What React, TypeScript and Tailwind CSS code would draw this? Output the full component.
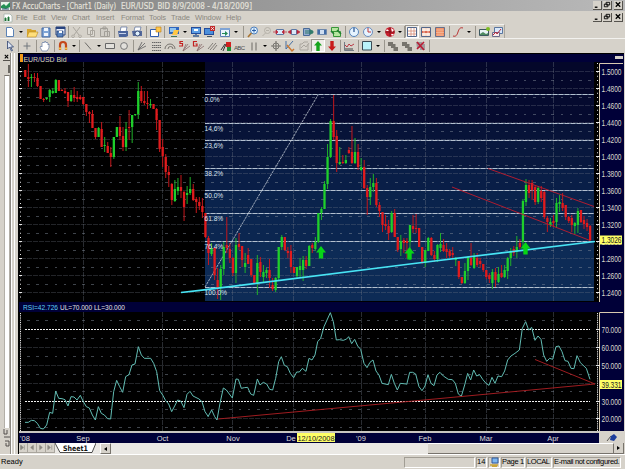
import type { ReactNode } from "react";
import { clsx } from "clsx";

type Candle = [up: 0 | 1, high: number, top: number, bottom: number, low: number];

const CANDLES: Candle[] = [
  [0, 70, 70, 77, 77], [0, 64, 77, 79, 87], [1, 74, 77, 78, 87], [0, 73, 77, 78, 82], [0, 73, 78, 86, 87],
  [0, 86, 86, 99, 99], [0, 98, 99, 100, 102], [1, 97, 98, 99, 100], [1, 89, 90, 97, 102], [1, 88, 91, 93, 94],
  [1, 79, 80, 93, 93], [0, 80, 80, 91, 91], [0, 89, 90, 91, 91], [0, 88, 91, 93, 94], [0, 92, 92, 101, 107],
  [1, 90, 95, 101, 102], [0, 87, 95, 98, 102], [0, 91, 97, 99, 102], [0, 95, 97, 99, 100], [0, 97, 97, 104, 105],
  [0, 104, 104, 112, 116], [0, 111, 112, 114, 123], [0, 110, 114, 128, 128], [0, 128, 128, 137, 139], [1, 127, 128, 137, 137],
  [0, 122, 129, 147, 147], [1, 137, 145, 146, 152], [0, 142, 146, 153, 153], [0, 147, 153, 157, 167], [1, 137, 137, 157, 159],
  [1, 127, 127, 137, 137], [0, 116, 127, 136, 140], [0, 127, 136, 147, 151], [1, 122, 129, 147, 151], [0, 110, 127, 128, 140],
  [1, 115, 115, 127, 143], [1, 114, 114, 115, 116], [1, 82, 91, 114, 119], [0, 86, 91, 101, 103], [0, 91, 101, 103, 105],
  [0, 91, 103, 104, 109], [1, 99, 104, 105, 108], [0, 104, 104, 109, 109], [0, 108, 109, 120, 130], [0, 120, 120, 149, 152],
  [0, 139, 147, 156, 167], [0, 154, 157, 172, 178], [0, 166, 172, 175, 187], [0, 183, 184, 200, 205], [1, 180, 189, 201, 202],
  [1, 178, 187, 191, 195], [0, 175, 187, 191, 198], [0, 191, 192, 207, 221], [1, 186, 193, 195, 204], [1, 177, 189, 193, 195],
  [0, 184, 189, 200, 201], [0, 197, 199, 202, 213], [0, 197, 202, 206, 210], [0, 198, 206, 212, 218], [0, 213, 213, 237, 238],
  [0, 236, 238, 253, 265], [1, 243, 248, 254, 256], [0, 247, 248, 275, 280], [0, 268, 280, 288, 299], [1, 265, 269, 288, 300],
  [1, 242, 247, 269, 275], [0, 217, 245, 248, 253], [0, 243, 249, 258, 263], [0, 257, 258, 273, 276], [1, 238, 245, 273, 283],
  [0, 233, 244, 247, 250], [0, 246, 246, 260, 267], [1, 253, 263, 267, 273], [0, 248, 255, 264, 264], [0, 259, 259, 275, 277],
  [0, 275, 275, 283, 284], [1, 255, 263, 283, 295], [0, 257, 262, 272, 277], [1, 265, 272, 277, 282], [1, 268, 270, 273, 278],
  [0, 259, 270, 278, 288], [0, 278, 285, 289, 291], [1, 277, 278, 290, 292], [1, 247, 247, 278, 280], [1, 235, 237, 247, 250],
  [0, 237, 237, 250, 251], [0, 247, 251, 253, 258], [0, 245, 251, 267, 273], [0, 267, 267, 273, 273], [1, 267, 267, 276, 279],
  [1, 258, 266, 270, 277], [1, 256, 260, 270, 281], [0, 256, 260, 266, 269], [1, 245, 246, 266, 266], [0, 243, 245, 248, 253],
  [1, 237, 242, 249, 251], [1, 213, 213, 242, 243], [1, 207, 209, 213, 220], [1, 181, 184, 209, 209], [1, 144, 157, 184, 189],
  [1, 119, 121, 157, 158], [0, 95, 121, 137, 140], [0, 130, 136, 163, 172], [1, 147, 162, 164, 165], [0, 155, 162, 163, 164],
  [1, 155, 160, 163, 164], [0, 147, 150, 153, 154], [0, 126, 152, 163, 164], [1, 138, 152, 163, 164], [0, 144, 152, 167, 170],
  [1, 158, 167, 170, 171], [0, 160, 167, 188, 189], [0, 185, 188, 197, 215], [1, 178, 187, 197, 205], [1, 174, 183, 187, 192],
  [0, 178, 183, 205, 207], [0, 202, 205, 211, 217], [0, 212, 212, 225, 232], [0, 215, 224, 226, 230], [0, 220, 226, 233, 240],
  [1, 211, 213, 232, 233], [0, 209, 213, 237, 237], [0, 237, 237, 250, 252], [1, 235, 241, 249, 256], [0, 238, 240, 243, 253],
  [0, 238, 241, 243, 258], [1, 225, 225, 242, 260], [0, 215, 226, 229, 233], [0, 214, 228, 229, 233], [0, 228, 228, 247, 247],
  [0, 247, 247, 262, 264], [1, 250, 250, 263, 267], [1, 237, 238, 251, 251], [0, 237, 238, 255, 256], [0, 251, 255, 259, 262],
  [1, 244, 245, 259, 262], [1, 233, 244, 248, 252], [0, 239, 245, 251, 252], [0, 243, 249, 252, 258], [0, 249, 251, 256, 258],
  [0, 247, 253, 255, 259], [1, 257, 259, 260, 266], [0, 261, 261, 277, 279], [0, 277, 277, 283, 284], [1, 263, 271, 283, 284],
  [1, 256, 257, 271, 280], [0, 243, 258, 265, 266], [1, 253, 257, 268, 269], [0, 253, 258, 265, 267], [0, 258, 261, 264, 268],
  [0, 264, 264, 270, 272], [0, 270, 270, 277, 279], [0, 273, 275, 279, 283], [1, 269, 272, 283, 289], [0, 268, 272, 280, 287],
  [1, 267, 274, 282, 283], [0, 265, 273, 277, 278], [1, 265, 270, 277, 278], [1, 257, 258, 271, 279], [1, 248, 252, 258, 266],
  [0, 246, 249, 253, 256], [1, 236, 247, 252, 258], [0, 239, 243, 247, 249], [1, 199, 201, 242, 246], [1, 179, 185, 202, 206],
  [0, 180, 185, 193, 198], [0, 180, 183, 190, 200], [0, 185, 187, 202, 205], [1, 186, 188, 202, 204], [0, 186, 191, 198, 202],
  [0, 191, 192, 217, 219], [0, 216, 218, 222, 232], [1, 218, 222, 225, 227], [0, 215, 221, 223, 227], [1, 198, 203, 222, 228],
  [1, 195, 202, 204, 212], [0, 193, 203, 208, 211], [0, 205, 205, 217, 220], [0, 216, 217, 221, 223], [0, 215, 218, 225, 232],
  [1, 222, 223, 226, 234], [1, 208, 211, 225, 233], [0, 210, 210, 222, 223], [0, 216, 220, 224, 229], [0, 219, 223, 227, 231],
  [0, 225, 226, 240, 241],
];

const RSI_PARTS = [
  {
    shift: 0,
    points:
      "75,367 85,367 94,361 103,362 112,370 121,385 130,387 140,375 149,337 158,340 167,273 176,295 186,296 195,299 204,318 213,290 222,291 231,300 241,286 250,305 259,320 268,324 277,345 286,360 295,320 304,340 313,345 323,356 332,357 341,275 350,241 359,260 368,277 377,230 387,224 396,195 405,192 415,140 424,165 433,175 452,175 461,190 470,215 479,272 488,285 497,302 506,312 515,335 524,318 533,300 542,303 552,323 561,283 570,274 579,288 597,297 606,305 615,335 625,350",
  },
  {
    shift: 200,
    points:
      "24,350 35,330 44,350 51,360 60,310 70,264 79,270 97,294 108,237 115,238 124,265 133,263 143,262 152,282 161,286 172,237 180,255 190,247 200,252 209,268 218,270 227,235 236,185 244,170 253,196 262,200 271,220 281,233 290,216 298,216 307,205 318,214 327,175 336,180 345,165 353,125 362,115 372,80 391,38 400,65 409,120 418,119 430,121 440,117 446,110 455,131 464,118 473,138 482,148 492,190 501,203 510,187 519,180 528,213 537,225 546,250 565,254 574,223 583,250 592,270 601,250 619,252",
  },
  {
    shift: 405,
    points:
      "5,254 14,217 23,217 32,222 42,260 51,272 60,258 69,224 78,250 87,257 96,225 105,217 115,228 130,238 142,239 151,250 160,282 169,289 179,255 188,220 197,240 206,210 215,228 224,224 233,238 243,250 252,256 261,232 270,250 279,228 290,230 299,213 308,180 318,168 330,160 343,150 352,85 362,65 371,90 380,82 390,121 399,108 408,118 416,165 425,184 434,175 443,178 453,140 462,138 471,155 480,182 489,184 498,205 507,206 516,167 526,188 544,205 555,238",
  },
];

const MONTH_LINES = [83, 162, 232, 293, 361, 425, 486, 553];

const FIBS: [string, number][] = [
  ["0.0%", 94.5], ["14.6%", 123.5], ["23.6%", 140.5], ["38.2%", 168.5],
  ["50.0%", 190.5], ["61.8%", 213.5], ["76.4%", 241.5], ["100.0%", 287.5],
];

const BANDS: [number, number, string][] = [
  [62, 94, "#04072a"], [94, 123, "#050a2f"], [123, 140, "#071338"], [140, 168, "#08183e"],
  [168, 190, "#091e47"], [190, 213, "#0a234c"], [213, 241, "#0b2650"], [241, 301, "#0d2b56"],
];

const PRICES = ["1.5000", "1.4800", "1.4600", "1.4400", "1.4200", "1.4000", "1.3800", "1.3600", "1.3400", "1.3200", "1.3000", "1.2800", "1.2600", "1.2400"];

const ICONS: Record<string, ReactNode> = {
  new: <path d="M3.5 2.5h5l2 2v7h-7z" fill="#fff" stroke="#5b82b5" />,
  open: <><path d="M2 4h4l1 1h4v6H2z" fill="#d8a52c" /><path d="M4 7h9l-2 5H2z" fill="#ffdf7a" stroke="#b88a22" strokeWidth=".6" /></>,
  save: <><path d="M3 3h8v9H3z" fill="#7fa5d6" stroke="#4369a5" /><path d="M5 3h4v3H5zM5 8h4v3H5z" fill="#eef4fc" /></>,
  saveAll: <><path d="M3 2h9v8H3z" fill="#e8eefa" stroke="#27427e" /><path d="M3 2h9v2H3z" fill="#27427e" /><path d="M4 6h6v6H4z" fill="#5a83bd" stroke="#1e3a70" strokeWidth=".7" /><path d="M6 6h3v2H6z" fill="#fff" /></>,
  cut: <path d="M3 2l6 8M10 2L4 10M3 10a1.3 1.3 0 1 0 .1 0M10 10a1.3 1.3 0 1 0 .1 0" fill="none" stroke="#aaa69e" />,
  copy: <path d="M3.5 2.5h5v7h-5zM6.5 5.5h4v6h-4z" fill="#dedbd4" stroke="#aaa69e" />,
  paste: <path d="M2.5 3.5h7v8h-7zM5 2h3v2H5zM6.500 6.500h5v5h-5z" fill="#d0cdc6" stroke="#a29f98" />,
  print: <><path d="M5 2h6l-1 5H4z" fill="#fff" stroke="#536a99" strokeWidth=".7" /><path d="M2 6h10v5l-2 1H3z" fill="#4c659c" /><path d="M3 8h7v1H3z" fill="#c7d3ea" /></>,
  preview: <><path d="M5 2h6l-1 4H4z" fill="#fff" stroke="#536a99" strokeWidth=".7" /><path d="M2 6h10v5H3z" fill="#53699b" /><circle cx="7.500" cy="8.500" r="2.500" fill="#dff0fb" stroke="#3c4f7d" /></>,
  chartWin: <><path d="M2.500 4.500h8v7h-8z" fill="#fff" stroke="#2f5db0" /><path d="M8 2h5v5H8z" fill="#ffc84b" stroke="#b87b16" strokeWidth=".6" /></>,
  monOrange: <><path d="M2 2h10v7H2z" fill="#2f66be" /><path d="M3 3h6v4H3z" fill="#8fc4f1" /><path d="M7 5h5l-2 5H5z" fill="#ffc744" /><path d="M4 11h6v1H4z" fill="#475" /></>,
  monBlue: <><path d="M2 2h10v7H2z" fill="#234c9c" /><path d="M3 3h8v5H3z" fill="#5e9fe4" /><path d="M5 4h4v2H5z" fill="#fff" /><path d="M6 9h2v1h2v2H4v-2h2z" fill="#607a9e" /></>,
  monRed: <><path d="M1 3h10v7H1z" fill="#234c9c" /><path d="M2 4h8v5H2z" fill="#4c8fdb" /><path d="M7 1h5v5H7z" fill="#c22b2b" /><path d="M8 2l3 3M11 2L8 5" stroke="#fff" strokeWidth=".7" /><path d="M4 11h5v1H4z" fill="#456" /></>,
  winArrow: <><path d="M2.500 3.500h9v8h-9z" fill="#eaf3fd" stroke="#5a7fb4" /><path d="M2 3h10v2H2z" fill="#7fa4d5" /><path d="M4 8h3V6l3 2.500L7 11V9H4z" fill="#248a56" /></>,
  zoomIn: <><circle cx="8" cy="5.500" r="3.500" fill="#dff1ff" stroke="#4b7ebd" /><path d="M6 5.500h4M8 3.500v4" stroke="#2a5ea5" /><path d="M5.500 8L2 12" stroke="#a97532" strokeWidth="1.700" /></>,
  zoomOut: <><circle cx="7.500" cy="5.500" r="3" fill="none" stroke="#b5b1a8" /><path d="M6 5.500h3M5.500 8L2.500 11" stroke="#b5b1a8" /></>,
  shrink: <><path d="M3.500 4.500h7v5h-7z" fill="#d8e8f8" stroke="#5b79a6" /><path d="M0 7h4M10 7h4M3 5l2 2-2 2zM11 5L9 7l2 2z" stroke="#b9263b" fill="#b9263b" strokeWidth=".7" /></>,
  expand: <><path d="M4.500 4.500h5v5h-5z" fill="#d8e8f8" stroke="#5b79a6" /><path d="M1 7l3-2v4zM13 7l-3-2v4z" fill="#b9263b" stroke="#b9263b" strokeWidth=".6" /></>,
  shiftBars: <><path d="M2.500 3.500h6v7h-6z" fill="#93acd0" stroke="#486a98" /><path d="M4 6h8M4 8h8" stroke="#317b6b" /><path d="M9 4l4 3-4 3z" fill="#317b6b" /></>,
  bars: <><path d="M2.500 4.500h9v5h-9z" fill="#cfdef1" stroke="#6f89ac" /><path d="M3 5h2v4H3zM9 5h2v4H9z" fill="#416ba6" /></>,
  refresh: <><path d="M2.500 2.500h7v4h-7zM4.500 6.500h7v5h-7z" fill="#b6e6a0" stroke="#39963a" /><path d="M2 6l3 3M8 5l4 4" stroke="#237f31" strokeWidth="1.500" /></>,
  clock: <><circle cx="7" cy="7" r="4.500" fill="#e6f4ff" stroke="#5585bd" /><path d="M7 3v4" stroke="#244d8e" strokeWidth="1.200" /></>,
  clockRed: <><circle cx="7" cy="7" r="4.500" fill="#e6f4ff" stroke="#6a8cbd" /><path d="M7 3v4h3" stroke="#c23535" fill="none" /></>,
  wheel: <><circle cx="7" cy="7" r="4.800" fill="#c81f2d" /><path d="M7 2v10M2 7h10" stroke="#5d111a" strokeWidth=".6" /><path d="M8 3l3 2-2 2zM4 4l2 2-3 0zM8 9h3l-2 2z" fill="#fff" /></>,
  gridA: <><path d="M2.500 2.500h9v9h-9z" fill="#fff" stroke="#53678b" /><path d="M3 6h8M3 9h8M6 3v8M9 3v8" stroke="#d58a75" strokeWidth=".8" /></>,
  gridB: <><path d="M2.500 2.500h9v9h-9z" fill="#f6d9c8" stroke="#53678b" /><path d="M3 7h8" stroke="#d0422a" strokeWidth="1.500" /><path d="M3 5h8M3 9h8M5 3v8M9 3v8" stroke="#fff" strokeWidth=".6" /></>,
  gridC: <><path d="M2.500 2.500h9v9h-9z" fill="#ee8457" stroke="#68708b" /><path d="M3 5h8M3 7.500h8M3 10h8M5 3v8M7 3v8M9 3v8" stroke="#f9c8aa" strokeWidth=".6" /></>,
  curve: <path d="M2 11c3 1 4-1 5-4s2-5 5-4" fill="none" stroke="#b93434" />,
  picture: <><path d="M2.500 4.500h9v6h-9z" fill="#e9f3f4" stroke="#3c5860" /><path d="M3 9l3-2 3 2 2-1v2H3z" fill="#4d8a60" /><circle cx="11" cy="4" r="2" fill="#7dbb24" /></>,
  chartPair: <><path d="M3.500 2.500h8v6h-8z" fill="#d9e8fa" stroke="#5976a0" /><path d="M1.500 7.500h7v4h-7z" fill="#f7eaea" stroke="#6c6c8c" /><path d="M2 10l3-3 1 2 4-5" fill="none" stroke="#b4243c" /></>,
  cursor: <path d="M4.500 2v8l2-2 2 4 1-.5L7.700 8h2.800z" fill="#dfe6f4" stroke="#2d416f" strokeWidth=".8" />,
  plus: <path d="M7 3.500v7M3.500 7h7" stroke="#71767d" />,
  hand: <path d="M4 12L2 8l1-1 1 1V4l1-1 1 1 1-2 1 1v1l1-1 1 1v2l1-1v4l-2 3z" fill="#fff" stroke="#7386a8" strokeWidth=".8" />,
  magnet: <><path d="M4 11V6a3 3 0 0 1 6 0v5" fill="none" stroke="#c4471b" strokeWidth="2.200" /><path d="M3 9.500h2.200M9 9.500h2.200" stroke="#f5c84b" strokeWidth="2" /></>,
  line: <path d="M4 3.500l6 7" stroke="#6d6b68" />,
  rect: <path d="M2.500 4.500h9v5h-9z" fill="#e2e0db" stroke="#666" />,
  circle: <circle cx="7" cy="7" r="3.400" fill="#e2e0db" stroke="#777" />,
  fan: <path d="M3 11L7 3M3 11l7-7M3 11l8-4" stroke="#6b6b6b" strokeWidth=".9" />,
  rows: <path d="M3 3.500h9M3 6.500h9M3 8.500h9M3 11.500h9" stroke="#666" strokeDasharray="1.500 .5" />,
  arcs: <path d="M2 10a5 5 0 0 1 10 0M5 10a2.500 2.500 0 0 1 5 0" fill="none" stroke="#77736d" />,
  fanS: <><path d="M6 12l5-7M6 12l7-5M6 12l3-7" stroke="#8a6d6d" strokeWidth=".8" /><path d="M6 2.500H3v2h2.500v2.500H2" fill="none" stroke="#c32020" strokeWidth="1.200" /></>,
  fanG: <><path d="M6 12l5-7M6 12l7-5M6 12l3-7" stroke="#8a6d6d" strokeWidth=".8" /><path d="M6 2.500H2.500v4.500H6V5H4.500" fill="none" stroke="#c32020" strokeWidth="1.200" /></>,
  parallels: <path d="M3 10l5-6M5 11l6-7M8 11l4-5" stroke="#77736d" strokeWidth=".9" />,
  brush: <><path d="M7 3h5v5H7z" fill="#d2211f" /><path d="M8 8h4v4H8z" fill="#208d35" /><path d="M2 11l4-6M4 12l3-7" stroke="#333" /></>,
  abc: <text x="1" y="10.500" fontSize="6" fill="#4b4b4b" textLength="11">ABC</text>,
  bars2: <path d="M5 3.500v8M9 3.500v8" stroke="#85827c" strokeWidth="1.300" />,
  target: <><circle cx="7" cy="7" r="3" fill="none" stroke="#77756f" /><path d="M7 2v10M2 7h10" stroke="#77756f" strokeWidth="1.200" /></>,
  percent: <><path d="M3 2v8l7-8" fill="none" stroke="#456fa3" /><path d="M4 6l5 6 2-2" fill="none" stroke="#cc7831" strokeWidth="1.500" /></>,
  ghost: <path d="M3 11V5h2l2-2h4M3 11h8V5M4 9l3-3 2 2 3-4" fill="none" stroke="#aaa69e" />,
  up: <path d="M7 2l4 4.500H8.700V12H5.300V6.500H3z" fill="#16a41c" />,
  down: <path d="M7 12l4-4.500H8.700V2H5.300v5.500H3z" fill="#c81a1a" />,
  pulse: <><path d="M2.500 3v8.500H12" fill="none" stroke="#737a83" /><path d="M3 6l2 2 2-3 2 2 3-2" fill="none" stroke="#b93845" /><path d="M3 10h8" stroke="#444" /></>,
  swatch: <path d="M2.500 2.500h9v8.500h-9z" fill="#baf3fa" stroke="#3b4b55" />,
  cascade: <path d="M2 3h5v2h2.500v3H12v4H7.500V9H5V7H2z" fill="#77746d" />,
  erase: <><path d="M2 3h6v2h3v6H6V9H3z" fill="#a19a9c" /><path d="M3 3l7 8M10 3L3 10" stroke="#b91b33" strokeWidth="1.600" /></>,
};

// name + cell width; "v" is the menu caret, "|" a separator
const TOP_TOOLS: [string, string][] = [
  ["new", "w-3.5"], ["v", "w-2"], ["open", "w-3.5"], ["save", "w-3.5"], ["saveAll", "w-3.5"], ["|", "w-[3px]"],
  ["cut", "w-3.5"], ["copy", "w-3.5"], ["paste", "w-3.5"], ["|", "w-1"], ["print", "w-3.5"], ["preview", "w-3.5"], ["|", "w-1"],
  ["chartWin", "w-3.5"], ["|", "w-1"], ["monOrange", "w-[15px]"], ["v", "w-2"], ["monBlue", "w-3.5"], ["monRed", "w-3.5"],
  ["winArrow", "w-[15px]"], ["v", "w-2"], ["|", "w-1.5"], ["zoomIn", "w-3.5"], ["zoomOut", "w-[13px]"], ["shrink", "w-3.5"],
  ["expand", "w-3.5"], ["shiftBars", "w-3.5"], ["bars", "w-3.5"], ["refresh", "w-3.5"], ["|", "w-1"], ["clock", "w-3.5"],
  ["clockRed", "w-3.5"], ["v", "w-2"], ["wheel", "w-3.5"], ["v", "w-1.5"], ["|", "w-0.5"], ["gridA", "w-3.5"], ["gridB", "w-3.5"],
  ["gridC", "w-3.5"], ["|", "w-1"], ["curve", "w-3.5"], ["v", "w-2"], ["|", "w-1"], ["picture", "w-3.5"], ["chartPair", "w-[13px]"],
];

const DRAW_TOOLS: [string, string][] = [
  ["cursor", "w-3.5"], ["|", "w-[3px]"], ["plus", "w-3.5"], ["|", "w-1"], ["hand", "w-3.5"], ["|", "w-1"], ["magnet", "w-3.5"], ["v", "w-2"],
  ["|", "w-[3px]"], ["line", "w-3.5"], ["v", "w-2"], ["rect", "w-3.5"], ["circle", "w-3.5"], ["|", "w-1"], ["fan", "w-3.5"],
  ["rows", "w-3.5"], ["arcs", "w-3.5"], ["fanS", "w-3.5"], ["fanG", "w-3.5"], ["parallels", "w-3.5"], ["brush", "w-3.5"], ["abc", "w-3.5"],
  ["bars2", "w-3.5"], ["v", "w-2"], ["target", "w-3.5"], ["percent", "w-3.5"], ["ghost", "w-3.5"], ["up", "w-3.5"], ["down", "w-3.5"],
  ["|", "w-[3px]"], ["pulse", "w-3.5"], ["|", "w-1"], ["swatch", "w-3.5"], ["v", "w-2"], ["|", "w-1"], ["cascade", "w-3.5"],
  ["cascade", "w-3.5"], ["erase", "w-3.5"], ["|", "w-[3px]"],
];

const MENU: [string, string][] = [
  ["File", "w-[17px]"], ["Edit", "w-[18px]"], ["View", "w-[21px]"], ["Chart", "w-6"], ["Insert", "w-[25px]"], ["Format", "w-7"],
  ["Tools", "w-[22px]"], ["Trade", "w-6"], ["Window", "w-[31px]"], ["Help", "w-4"],
];

function Toolbar({ tools, className }: { tools: [string, string][]; className?: string }) {
  return (
    <div className={clsx("flex h-3.5 items-center border-t border-white/70 pl-[3px]", className)}>
      {tools.map(([name, width], i) => (
        <span
          key={i}
          className={clsx(
            "flex h-[13px] shrink-0 items-center justify-center",
            width,
            (name === "up" || name === "gridA") && "border border-[#9b978f] border-r-white border-b-white bg-[#efede8]"
          )}
        >
          {name === "|" && <span className="h-3 w-px bg-[#9a968d]" />}
          {name === "v" && <span className="border-x-2 border-t-2 border-x-transparent border-t-black" />}
          {ICONS[name] && (
            <svg viewBox="0 0 14 14" className="h-3.5 w-3.5 shrink-0">
              {ICONS[name]}
            </svg>
          )}
        </span>
      ))}
    </div>
  );
}

function WindowButtons() {
  return (
    <div className="ml-auto flex gap-px pr-[2px]">
      {["M2 7h3", "M3.500 1.500h4v3h-4zM1.500 3.500h4v3h-4z", "M2 1.500l5 5M7 1.500l-5 5"].map((d, i) => (
        <svg key={d} viewBox="0 0 9 9" className={clsx("h-[9px] w-[9px] border-r border-b border-[#55524d] bg-[#d6d2ca]", i === 2 && "ml-px")}>
          <path d={d} fill="none" stroke="#000" strokeWidth={i === 1 ? 1 : 1.5} />
        </svg>
      ))}
    </div>
  );
}

function GridLines({ from, to, rows, midRows, right }: { from: number; to: number; rows: number[]; midRows: number[]; right: number }) {
  return (
    <g fill="none" shapeRendering="crispEdges">
      {MONTH_LINES.map((x) => (
        <path key={x} d={`M${x + 0.5} ${from}V${to}`} stroke="#737b88" strokeOpacity=".36" strokeDasharray="5 1" />
      ))}
      {rows.map((y) => (
        <path key={y} d={`M21 ${y}H${right}`} stroke="#737b88" strokeOpacity=".3" strokeDasharray="5 1" />
      ))}
      {midRows.map((y) => (
        <path key={y} d={`M27 ${y}H${right}`} stroke="#7d8795" strokeOpacity=".5" strokeDasharray="2.500 6.700" />
      ))}
    </g>
  );
}

function Arrow({ x, y }: { x: number; y: number }) {
  return <path d={`M${x} ${y}l5 6.500h-2.800v6h-4.400v-6h-2.800z`} fill="#08d516" />;
}

function PriceChart() {
  const rows = PRICES.map((_, i) => Math.round(71.5 + i * 17) - 0.5);
  return (
    <svg viewBox="19 62 605 240" className="block h-[240px] w-[605px] bg-black font-['Liberation_Sans']">
      {BANDS.map(([top, bottom, fill]) => (
        <rect key={top} x="205" y={top} width="389" height={bottom - top} fill={fill} />
      ))}
      <rect x="600" y="62" width="24" height="240" fill="#000038" />
      <GridLines from={62} to={301} rows={rows} midRows={rows.slice(0, -1).map((y) => y + 9)} right={594} />

      <g shapeRendering="crispEdges">
        {FIBS.map(([label, y]) => (
          <g key={label}>
            <path d={`M205 ${y}H594`} stroke="#7b8da6" />
            <path d={`M205 ${y}H594`} stroke="#b3c0cf" strokeDasharray="4 2" />
          </g>
        ))}
      </g>
      <path d="M205 287L318 95" stroke="#c6ced8" strokeWidth=".8" strokeDasharray="2.500 .8" />

      {CANDLES.map(([up, high, top, bottom, low], i) => {
        const x = 25.3 + i * 3.053;
        return (
          <g key={i}>
            <rect x={x - 0.5} y={high} width="1" height={Math.max(1, low - high)} fill={up ? "#1fb02a" : "#c4171b"} />
            <rect x={x - 1.15} y={top} width="2.300" height={Math.max(1, bottom - top)} fill={up ? "#1fcf2b" : "#e11b1d"} />
          </g>
        );
      })}

      <g fill="#dce5ee" fontSize="7.500">
        {FIBS.map(([label, y]) => (
          <text key={label} x="204.500" y={y + 7.500} textLength={label.length * 3.75} lengthAdjust="spacingAndGlyphs">{label}</text>
        ))}
      </g>
      <path d="M488 168.500L594 206.500M452 187L590 240.500" stroke="#c21c2c" strokeWidth=".9" />
      <path d="M181 292.500L200 290.300L410 264L595 241.500" fill="none" stroke="#48e4f4" strokeWidth="1.700" />
      <Arrow x={321} y={246} />
      <Arrow x={409.5} y={247} />
      <Arrow x={525.5} y={242} />

      {/* left ruler and price axis */}
      <path d="M20.500 67V299M597.500 63V299" stroke="#e8e8e8" strokeDasharray="1 3.250" />
      <path d="M599.500 302V63.500H623" fill="none" stroke="#d8c9b0" />
      {PRICES.map((price, i) => (
        <g key={price}>
          <path d={`M596 ${rows[i]}h4M19 ${rows[i]}h3`} stroke="#e8e8e8" />
          <text x="601.500" y={rows[i] + 3.3} fontSize="8.500" fill="#d9d8cc" textLength="20" lengthAdjust="spacingAndGlyphs">{price}</text>
        </g>
      ))}
      <rect x="600" y="235.500" width="22" height="9" fill="#ffff66" />
      <text x="601.500" y="243.300" fontSize="8.500" fill="#222" textLength="20" lengthAdjust="spacingAndGlyphs">1.3026</text>
    </svg>
  );
}

function RsiChart() {
  const levels: [string, number][] = [["70.000", 329.5], ["60.000", 347.5], ["50.000", 365.5], ["30.000", 401.5], ["20.000", 418.5]];
  return (
    <svg viewBox="19 312 605 119" className="block h-[119px] w-[605px] bg-black font-['Liberation_Sans']">
      <rect x="600" y="312" width="24" height="119" fill="#000038" />
      <GridLines from={312} to={431} rows={[347.5, 365.5, 383.5, 418.5]} midRows={[320.5, 338.5, 356.5, 374.5, 391.5, 409.5, 427.5]} right={598} />
      <path d="M25 329.500H590M25 401.500H590" stroke="#f2f2f2" strokeDasharray="2 1" shapeRendering="crispEdges" />
      {RSI_PARTS.map(({ shift, points }) => (
        <polyline
          key={shift}
          points={points}
          transform={`translate(${shift} 300) scale(0.33333)`}
          fill="none"
          stroke="#62bdb4"
          strokeWidth="3"
        />
      ))}
      <path d="M218 419L408 401.500L595 384L535 359.500" fill="none" stroke="#b01f24" strokeWidth=".9" />
      <path d="M20.500 313V431M597.500 313V431" stroke="#e8e8e8" strokeDasharray="1 .8" />
      <path d="M599.500 431V312.500H623" fill="none" stroke="#d8c9b0" />
      {levels.map(([label, y]) => (
        <g key={label}>
          <path d={`M596 ${y}h4`} stroke="#e8e8e8" />
          <text x="601.500" y={y + 3.3} fontSize="8.500" fill="#d9d8cc" textLength="20" lengthAdjust="spacingAndGlyphs">{label}</text>
        </g>
      ))}
      <rect x="600" y="380" width="22" height="9" fill="#ffff66" />
      <text x="601.500" y="387.800" fontSize="8.500" fill="#222" textLength="20" lengthAdjust="spacingAndGlyphs">39.331</text>
    </svg>
  );
}

function TimeAxis() {
  const months: [string, number][] = [["'08", 25], ["Sep", 83], ["Oct", 162.5], ["Nov", 233], ["De", 291], ["'09", 361], ["Feb", 425], ["Mar", 486], ["Apr", 553]];
  return (
    <svg viewBox="19 431 605 12" className="block h-3 w-[605px] bg-[#000038] font-['Liberation_Sans']">
      <path d="M19 432H599" stroke="#c8c5c0" strokeWidth="2" />
      <g fontSize="7.500" fill="#dddcd8" textAnchor="middle">
        {months.map(([label, x]) => (
          <text key={label} x={x} y="440.500">{label}</text>
        ))}
      </g>
      <rect x="297" y="433" width="38" height="9" fill="#ffff66" />
      <text x="297.500" y="440.800" fontSize="8" fill="#222" textLength="37" lengthAdjust="spacingAndGlyphs">12/10/2008</text>
      <rect x="599" y="431" width="25" height="12" fill="#d6d2ca" />
      <path d="M607 441l4-5" stroke="#333" strokeWidth=".8" />
      <path d="M611 436l3-2 3 3-3 4-4-1z" fill="#1d3d9c" />
    </svg>
  );
}

function SheetTabs() {
  return (
    <div className="flex h-[11px] items-stretch bg-[#eae8e4] text-[8px]">
      {["M6 2v5M5 4.500L2 2v5zM2 2v5", "M6 2v5L3 4.500z", "M3 2v5l3-2.500z", "M2 2v5l3-2.500zM6.500 2v5"].map((d) => (
        <svg key={d} viewBox="0 0 9 9" className="h-[10px] w-[9px] border-r border-b border-[#a9a59d] bg-[#d6d2ca]">
          <path d={d} fill="#88857f" stroke="#88857f" strokeWidth=".7" />
        </svg>
      ))}
      <svg viewBox="0 0 41 10" className="h-[10px] w-[41px] font-['DejaVu_Sans']">
        <path d="M0 0H41L37 9.500H5z" fill="#fff" />
        <path d="M0 0l5 9.500h32L41 0" fill="none" stroke="#222" strokeWidth=".8" />
        <text x="8" y="7.500" fontSize="7.500" fontWeight="700" fill="#111" textLength="25" lengthAdjust="spacingAndGlyphs">Sheet1</text>
      </svg>
      <span className="ml-1 flex w-[11px] items-center justify-center border border-[#77736c] border-t-white border-l-white bg-[#d6d2ca]">
        <span className="border-y-2 border-r-[3px] border-y-transparent border-r-black" />
      </span>
      <span className="flex-1" />
      <span className="w-[186px] border-r border-b border-[#77736c] border-t border-t-white bg-[#d6d2ca]" />
      <span className="flex w-[10px] items-center justify-center border-r border-b border-[#77736c] bg-[#d6d2ca]">
        <span className="border-y-2 border-l-[3px] border-y-transparent border-l-black" />
      </span>
    </div>
  );
}

function StatusBar() {
  const cell = "flex h-[11px] items-center border border-[#a19d94] border-r-white border-b-white whitespace-nowrap";
  return (
    <div className="flex h-[15px] items-center gap-px border-t border-white bg-[#d6d2ca] pr-1 text-[7.5px] leading-none text-black">
      <span className="flex-1 pl-px">Ready</span>
      <span className={clsx(cell, "w-[71px]")} />
      <span className={clsx(cell, "w-[11px]")}>14</span>
      <span className={clsx(cell, "w-[12px]")}>
        <svg viewBox="0 0 10 10" className="h-2.5 w-2.5">
          <path d="M3 1h6v5H3z" fill="#7db6ee" stroke="#31589a" />
          <path d="M1 8h8M3 9.500h5" stroke="#c9a53a" strokeWidth="1.300" />
        </svg>
      </span>
      <span className={clsx(cell, "w-[24px] tracking-[-0.3px]")}>Page 1</span>
      <span className={clsx(cell, "w-[26px] tracking-[-0.4px]")}>LOCAL</span>
      <span className={clsx(cell, "w-[68px] tracking-[-0.35px]")}>E-mail not configured.</span>
    </div>
  );
}

function SidePanel() {
  return (
    <div className="flex w-[19px] shrink-0 border-r border-black bg-[#d6d2ca] pl-[3px]">
      <div className="flex w-[7px] flex-col items-center pt-px">
        <svg viewBox="0 0 8 7" className="h-[7px] w-2 border-r border-b border-[#55524d]">
          <path d="M2 1l4 4M6 1L2 5" stroke="#000" strokeWidth="1.200" />
        </svg>
        <span className="mt-1 h-2 w-0.5 self-end border border-[#6b6862] bg-[#efede8]" />
        <span className="mt-0.5 w-1.5 flex-1 border-x border-[#b3afa7] border-t border-t-[#77736c] bg-white" />
        <svg viewBox="0 0 8 20" className="mb-1.5 h-5 w-2">
          <path d="M1 1v5h3V2M1 9h6M2 13h4v5H3v-3" fill="none" stroke="#45423e" strokeWidth=".9" />
        </svg>
      </div>
      <div className="w-px bg-[#8d8982]" />
      <div className="w-1 border-x border-white" />
    </div>
  );
}

export default function App() {
  return (
    <div className="flex h-[469px] w-[625px] flex-col overflow-hidden bg-[#d6d2ca] font-['Liberation_Sans',sans-serif]">
      <header className="flex h-[11px] shrink-0 items-center bg-linear-to-r from-[#828282] to-[#b9b9b9] pl-px">
        <svg viewBox="0 0 10 10" className="h-2.5 w-2.5">
          <path d="M0 1h9v8H0z" fill="#e8f2e8" />
          <path d="M0 5l3-2 2 2 4-4v5L5 8 0 7z" fill="#238f53" />
          <path d="M1 8h7" stroke="#34507b" />
        </svg>
        <svg viewBox="0 0 246 11" className="h-[11px] w-[246px] font-['DejaVu_Sans']">
          <text x="1" y="8.500" fontSize="8" fill="#e6e3dc" stroke="#e6e3dc" strokeWidth=".15" textLength="104" lengthAdjust="spacingAndGlyphs">FX AccuCharts - [Chart1 (Daily)</text>
          <text x="110" y="8.500" fontSize="8" fill="#e6e3dc" stroke="#e6e3dc" strokeWidth=".15" textLength="131" lengthAdjust="spacingAndGlyphs">EUR/USD_BID 8/9/2008 - 4/18/2009]</text>
        </svg>
        <WindowButtons />
      </header>
      <nav className="flex h-[13px] shrink-0 items-center text-[7.5px] leading-none tracking-[-0.1px] text-[#8b8880]">
        <svg viewBox="0 0 10 10" className="mx-[3px] h-2.5 w-2.5">
          <path d="M1 1h6l2 2v6H1z" fill="#fff" stroke="#9bada4" strokeWidth=".7" />
          <path d="M2 8V5h1v3M5 8V4h1v4" stroke="#2b8a46" />
        </svg>
        {MENU.map(([label, width]) => (
          <span key={label} className={clsx("shrink-0", width)}>{label}</span>
        ))}
        <WindowButtons />
      </nav>
      <Toolbar tools={TOP_TOOLS} className="w-[505px] border-r border-r-[#aaa69e]" />
      <Toolbar tools={DRAW_TOOLS} />
      <main className="flex h-[402px] shrink-0 pt-px">
        <SidePanel />
        <div className="w-[605px]">
          <div className="flex h-[9px] items-center border-t border-black bg-[#000038] font-['Liberation_Sans']">
            <span className="ml-px h-2 w-[3px] bg-[#f39a17]" />
            <svg viewBox="0 0 46 9" className="h-[9px] w-[46px]">
              <text x=".5" y="7.500" fontSize="8" fill="#dddc9d" textLength="43" lengthAdjust="spacingAndGlyphs">EUR/USD Bid</text>
            </svg>
            <span className="mr-px mb-px ml-auto h-[3px] w-2 bg-[#d6d2ca]" />
          </div>
          <PriceChart />
          <div className="h-[10px] bg-[#000038] font-['Liberation_Sans']">
            <svg viewBox="0 0 120 10" className="ml-1 h-[10px] w-[120px]">
              <text x="0" y="8" fontSize="8" fill="#5fd0f2" textLength="35" lengthAdjust="spacingAndGlyphs">RSI=42.726</text>
              <text x="37" y="8" fontSize="8" fill="#e2e2e2" textLength="65" lengthAdjust="spacingAndGlyphs">UL=70.000 LL=30.000</text>
            </svg>
          </div>
          <RsiChart />
          <TimeAxis />
          <SheetTabs />
        </div>
      </main>
      <StatusBar />
    </div>
  );
}
